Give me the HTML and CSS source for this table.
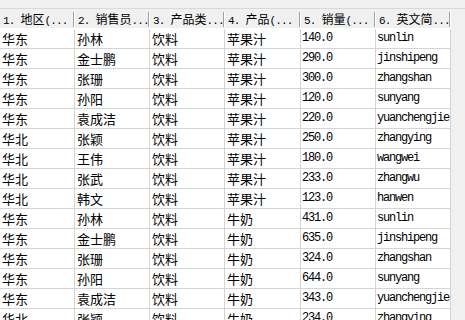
FILE: index.html
```html
<!DOCTYPE html>
<html>
<head>
<meta charset="utf-8">
<link rel="stylesheet" href="styles.css">
</head>
<body>
<div class="band"></div>
<div class="grid">
  <div class="row head">
    <div class="hc"><span class="hm">1. </span>地区<span class="hm">(...</span></div>
    <div class="hc"><span class="hm">2. </span>销售员<span class="hm">...</span></div>
    <div class="hc"><span class="hm">3. </span>产品类<span class="hm">...</span></div>
    <div class="hc"><span class="hm">4. </span>产品<span class="hm">(...</span></div>
    <div class="hc"><span class="hm">5. </span>销量<span class="hm">(...</span></div>
    <div class="hc"><span class="hm">6. </span>英文简<span class="hm">...</span></div>
  </div>
  <div class="row"><div class="c">华东</div><div class="c">孙林</div><div class="c">饮料</div><div class="c">苹果汁</div><div class="c m">140.0</div><div class="c m">sunlin</div></div>
  <div class="row"><div class="c">华东</div><div class="c">金士鹏</div><div class="c">饮料</div><div class="c">苹果汁</div><div class="c m">290.0</div><div class="c m">jinshipeng</div></div>
  <div class="row"><div class="c">华东</div><div class="c">张珊</div><div class="c">饮料</div><div class="c">苹果汁</div><div class="c m">300.0</div><div class="c m">zhangshan</div></div>
  <div class="row"><div class="c">华东</div><div class="c">孙阳</div><div class="c">饮料</div><div class="c">苹果汁</div><div class="c m">120.0</div><div class="c m">sunyang</div></div>
  <div class="row"><div class="c">华东</div><div class="c">袁成洁</div><div class="c">饮料</div><div class="c">苹果汁</div><div class="c m">220.0</div><div class="c m">yuanchengjie</div></div>
  <div class="row"><div class="c">华北</div><div class="c">张颖</div><div class="c">饮料</div><div class="c">苹果汁</div><div class="c m">250.0</div><div class="c m">zhangying</div></div>
  <div class="row"><div class="c">华北</div><div class="c">王伟</div><div class="c">饮料</div><div class="c">苹果汁</div><div class="c m">180.0</div><div class="c m">wangwei</div></div>
  <div class="row"><div class="c">华北</div><div class="c">张武</div><div class="c">饮料</div><div class="c">苹果汁</div><div class="c m">233.0</div><div class="c m">zhangwu</div></div>
  <div class="row"><div class="c">华北</div><div class="c">韩文</div><div class="c">饮料</div><div class="c">苹果汁</div><div class="c m">123.0</div><div class="c m">hanwen</div></div>
  <div class="row"><div class="c">华东</div><div class="c">孙林</div><div class="c">饮料</div><div class="c">牛奶</div><div class="c m">431.0</div><div class="c m">sunlin</div></div>
  <div class="row"><div class="c">华东</div><div class="c">金士鹏</div><div class="c">饮料</div><div class="c">牛奶</div><div class="c m">635.0</div><div class="c m">jinshipeng</div></div>
  <div class="row"><div class="c">华东</div><div class="c">张珊</div><div class="c">饮料</div><div class="c">牛奶</div><div class="c m">324.0</div><div class="c m">zhangshan</div></div>
  <div class="row"><div class="c">华东</div><div class="c">孙阳</div><div class="c">饮料</div><div class="c">牛奶</div><div class="c m">644.0</div><div class="c m">sunyang</div></div>
  <div class="row"><div class="c">华东</div><div class="c">袁成洁</div><div class="c">饮料</div><div class="c">牛奶</div><div class="c m">343.0</div><div class="c m">yuanchengjie</div></div>
  <div class="row"><div class="c">华北</div><div class="c">张颖</div><div class="c">饮料</div><div class="c">牛奶</div><div class="c m">234.0</div><div class="c m">zhangying</div></div>
</div>
</body>
</html>
```
FILE: styles.css
```css
html, body {
  margin: 0;
  padding: 0;
  background: #f0f0f0;
  overflow: hidden;
  height: 320px;
}
body {
  font-family: "Noto Sans CJK SC", sans-serif;
  font-size: 13px;
  color: #000;
}
.band {
  height: 8px;
  background: #f0f0f0;
  border-bottom: 1px solid #d9d9d9;
}
.grid {
  width: 451px;
}
.row {
  display: grid;
  grid-template-columns: 75px 75px 75px 76px 75px 75px;
  height: 20px;
  background: #fff;
}
.row.head {
  height: 19px;
  background: #f0f0f0;
  border-bottom: 1px solid #fff;
}
.hc {
  padding-left: 3px;
  font-size: 12px;
  line-height: 19px;
  white-space: nowrap;
  background: linear-gradient(#a0a0a0, #a0a0a0) right 1px top 3px / 1px 15px no-repeat,
              linear-gradient(#ffffff, #ffffff) right 0 top 3px / 1px 15px no-repeat;
}
.hm {
  font-family: "Liberation Mono", monospace;
  font-size: 11px;
  letter-spacing: -0.8px;
}
.c {
  padding-left: 2px;
  line-height: 19px;
  border-right: 1px solid #d4d4d4;
  border-bottom: 1px solid #d4d4d4;
  white-space: nowrap;
}
.m {
  padding-left: 1px;
  font-family: "Liberation Mono", monospace;
  font-size: 12px;
  letter-spacing: -1.2px;
}
```
